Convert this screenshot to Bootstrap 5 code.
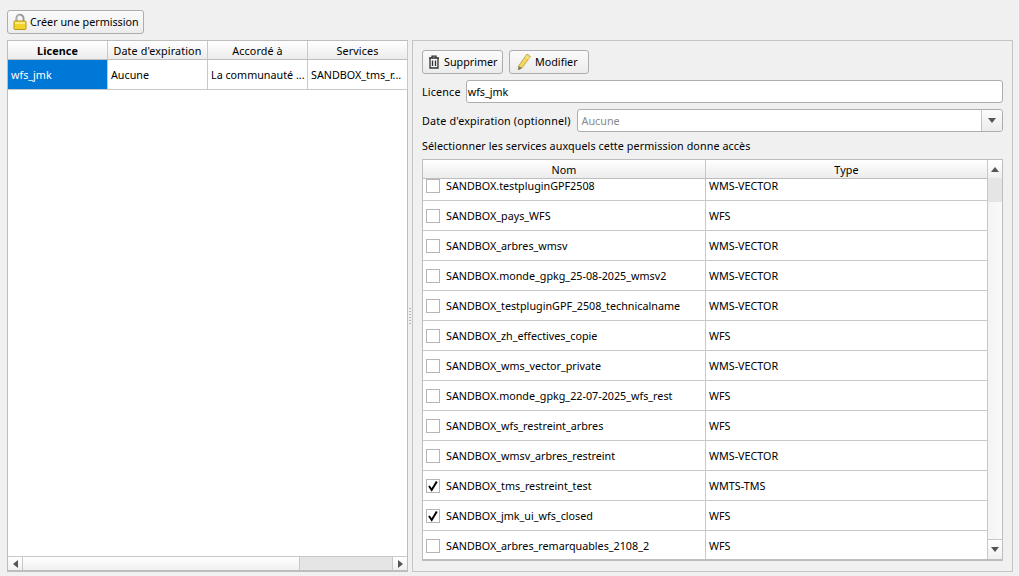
<!DOCTYPE html>
<html lang="fr"><head><meta charset="utf-8"><title>Permissions</title>
<link href="https://cdn.jsdelivr.net/npm/bootstrap@5.3.0/dist/css/bootstrap.min.css" rel="stylesheet">
<style>
html,body{height:576px;overflow:hidden}
body{background:#f0f0f0;font-family:"Noto Sans","Open Sans",sans-serif;font-size:10.75px;color:#000;padding:10px 6px 4px 7px;line-height:14px;display:flex;flex-direction:column;gap:6px}
.qbtn{height:24px;padding:0 5px;font:inherit;color:#000;background:linear-gradient(#fbfbfb,#ececec);border:1px solid #adadad;border-radius:3px;display:inline-flex;align-items:center;gap:3px;white-space:nowrap}
.qbtn svg{flex:none}
.btn-create{width:137px;padding-left:4px;gap:2px}
.btn-del{width:81px;padding-left:4px}
.btn-edit{width:80px;gap:3px;padding-left:7px}
.workarea{flex:1;min-height:0;gap:4px}
.leftpane{width:401px;background:#fff;border:1px solid #bdbdbd;border-bottom-width:2px}
.rightpane{width:601px;border:1px solid #c4c4c4;padding:9px 9px 10px;gap:6px;background:#f0f0f0}
.btnrow{gap:6px}
.grid{table-layout:fixed;border-collapse:separate;border-spacing:0;margin:0;background:#fff}
.grid th{height:19px;padding:1px 0 0;text-align:center;font-weight:400;background:linear-gradient(#fff,#ececec);border-right:1px solid #c8c8c8;border-bottom:1px solid #bdbdbd;vertical-align:middle;overflow:hidden;white-space:nowrap;letter-spacing:.12px}
.grid th.act{font-weight:700}
.grid td{height:30px;padding:0 3px;border-right:1px solid #c8c8c8;border-bottom:1px solid #c8c8c8;vertical-align:middle;overflow:hidden;white-space:nowrap}
.grid td.sel{background:#0078d7;color:#fff}
.lefttable{width:400px}
.lefttable col{width:100px}
.blank{min-height:0}
.hscroll{height:14px;border-top:1px solid #c8c8c8;background:#e5e5e5}
.sarrow{width:15px;height:100%;background:linear-gradient(#fff,#f0f0f0);display:flex;align-items:center;justify-content:center;flex:none}
.hscroll .sarrow:first-child{border-right:1px solid #c8c8c8}
.hscroll .sarrow:last-child{border-left:1px solid #c8c8c8}
.hthumb{width:277px;background:linear-gradient(#fff,#f0f0f0);border-right:1px solid #c8c8c8}
.tri-l{border:4px solid transparent;border-left:0;border-right:5px solid #555}
.tri-r{border:4px solid transparent;border-right:0;border-left:5px solid #555}
.tri-u{border:4px solid transparent;border-top:0;border-bottom:5px solid #555}
.tri-d{border:4px solid transparent;border-bottom:0;border-top:5px solid #555}
.field{height:23px;background:#fff;border:1px solid #adadad;border-radius:3px;padding:0 1px;display:flex;align-items:center}
.lbl{white-space:nowrap;letter-spacing:.17px}
.fieldrow{gap:6px}
.licfield{margin-left:-1px}
.muted{color:#8a8a8a}
.combo{padding-right:0;padding-left:4px}
.dropcell{width:21px;height:100%;margin-left:auto;border-left:1px solid #c4c4c4;background:linear-gradient(#fbfbfb,#ececec);display:flex;align-items:center;justify-content:center;border-radius:0 3px 3px 0}
.svcbox{flex:1;min-height:0;background:#fff;border:1px solid #bdbdbd;border-bottom-width:2px;overflow:hidden}
.svcmain{width:565px;min-width:0}
.svcview{flex:1;min-height:0;overflow:hidden}
.svchead{width:565px}
.svctable{width:565px;margin-top:-8px}
.c1{width:283px}
.c2{width:282px}
.svctable td.namecell{padding:0 0 0 3px}
.namecell .inner{display:flex;align-items:center;gap:6px}
.tick{width:14px;height:14px;border:1px solid #b5b5b5;background:#fff;flex:none;display:flex;align-items:center;justify-content:center}
.svctable td.typecell{padding-left:3px}
.vscroll{width:15px;border-left:1px solid #c8c8c8;background:linear-gradient(90deg,#f4f4f4,#fafafa)}
.vscroll .sarrow{height:18px;width:100%;background:linear-gradient(#fff,#f0f0f0)}
.vthumb{height:24px;background:#e5e5e5;flex:none}
.vrest{flex:1}
.vscroll .vdown{border-top:1px solid #c8c8c8;height:20px}
.splitdots{width:4px;position:absolute;left:409px;top:308px;display:flex;flex-direction:column;gap:2px}
.splitdots i{width:2px;height:1px;background:#b5b5b5;display:block}
.section-lbl{margin-top:1px;letter-spacing:.08px}
</style></head>
<body>
<div class="d-flex"><button class="qbtn btn-create" type="button">
<svg width="16" height="18" viewBox="0 0 16 18"><path d="M4.500 8V5.200a3.500 3.500 0 0 1 7 0V8" fill="none" stroke="#9a9a9a" stroke-width="2"/><path d="M5 8V5.200a3 3 0 0 1 3-3" fill="none" stroke="#d8d8d8" stroke-width=".8"/><rect x="2" y="8" width="12" height="8.500" rx="1" fill="#f3d22b" stroke="#b79a14"/><rect x="3" y="9" width="10" height="2" fill="#faea7a"/></svg>
<span>Créer une permission</span></button></div>
<div class="workarea d-flex">
  <div class="leftpane d-flex flex-column">
    <table class="grid lefttable"><colgroup><col><col><col><col></colgroup>
    <thead><tr><th class="act">Licence</th><th>Date d'expiration</th><th>Accordé à</th><th>Services</th></tr></thead>
    <tbody><tr><td class="sel">wfs_jmk</td><td>Aucune</td><td>La communauté ...</td><td>SANDBOX_tms_r...</td></tr></tbody></table>
    <div class="blank flex-grow-1"></div>
    <div class="hscroll d-flex"><div class="sarrow"><span class="tri-l"></span></div><div class="hthumb"></div><div class="flex-grow-1"></div><div class="sarrow"><span class="tri-r"></span></div></div>
  </div>
  <div class="rightpane d-flex flex-column">
    <div class="d-flex btnrow">
      <button class="qbtn btn-del" type="button"><svg width="14" height="16" viewBox="0 0 14 16"><path d="M2 4h10M5 4V2.200h4V4M3 4.500V14h8V4.500M5.500 6.500v5.500M8.500 6.500v5.500" fill="none" stroke="#333" stroke-width="1.300"/></svg><span>Supprimer</span></button>
      <button class="qbtn btn-edit" type="button"><svg width="15" height="18" viewBox="0 0 15 18"><path d="M10 1l3.500 2.500L5 15l-3.600 2L1.500 13z" fill="#f2d65a" stroke="#b8a24a" stroke-width=".8"/><path d="M1.500 13L5 15l-3.600 2z" fill="#777"/><path d="M9 3.500l3 2" stroke="#fff3a8"/></svg><span>Modifier</span></button>
    </div>
    <div class="d-flex fieldrow align-items-center"><span class="lbl">Licence</span><div class="field flex-grow-1 licfield">wfs_jmk</div></div>
    <div class="d-flex fieldrow align-items-center"><span class="lbl">Date d'expiration (optionnel)</span><div class="field combo flex-grow-1 muted">Aucune<span class="dropcell"><span class="tri-d"></span></span></div></div>
    <div class="lbl section-lbl">Sélectionner les services auxquels cette permission donne accès</div>
    <div class="svcbox d-flex">
      <div class="svcmain d-flex flex-column">
        <table class="grid svchead"><colgroup><col class="c1"><col class="c2"></colgroup><thead><tr><th>Nom</th><th>Type</th></tr></thead></table>
        <div class="svcview">
        <table class="grid svctable"><colgroup><col class="c1"><col class="c2"></colgroup><tbody>
        <tr><td class="namecell"><div class="inner"><span class="tick"></span>SANDBOX.testpluginGPF2508</div></td><td class="typecell">WMS-VECTOR</td></tr>
        <tr><td class="namecell"><div class="inner"><span class="tick"></span>SANDBOX_pays_WFS</div></td><td class="typecell">WFS</td></tr>
        <tr><td class="namecell"><div class="inner"><span class="tick"></span>SANDBOX_arbres_wmsv</div></td><td class="typecell">WMS-VECTOR</td></tr>
        <tr><td class="namecell"><div class="inner"><span class="tick"></span>SANDBOX.monde_gpkg_25-08-2025_wmsv2</div></td><td class="typecell">WMS-VECTOR</td></tr>
        <tr><td class="namecell"><div class="inner"><span class="tick"></span>SANDBOX_testpluginGPF_2508_technicalname</div></td><td class="typecell">WMS-VECTOR</td></tr>
        <tr><td class="namecell"><div class="inner"><span class="tick"></span>SANDBOX_zh_effectives_copie</div></td><td class="typecell">WFS</td></tr>
        <tr><td class="namecell"><div class="inner"><span class="tick"></span>SANDBOX_wms_vector_private</div></td><td class="typecell">WMS-VECTOR</td></tr>
        <tr><td class="namecell"><div class="inner"><span class="tick"></span>SANDBOX.monde_gpkg_22-07-2025_wfs_rest</div></td><td class="typecell">WFS</td></tr>
        <tr><td class="namecell"><div class="inner"><span class="tick"></span>SANDBOX_wfs_restreint_arbres</div></td><td class="typecell">WFS</td></tr>
        <tr><td class="namecell"><div class="inner"><span class="tick"></span>SANDBOX_wmsv_arbres_restreint</div></td><td class="typecell">WMS-VECTOR</td></tr>
        <tr><td class="namecell"><div class="inner"><span class="tick"><svg width="12" height="12" viewBox="0 0 12 12"><path d="M2 6l2.700 4L9.800 1.500" fill="none" stroke="#000" stroke-width="2"/></svg></span>SANDBOX_tms_restreint_test</div></td><td class="typecell">WMTS-TMS</td></tr>
        <tr><td class="namecell"><div class="inner"><span class="tick"><svg width="12" height="12" viewBox="0 0 12 12"><path d="M2 6l2.700 4L9.800 1.500" fill="none" stroke="#000" stroke-width="2"/></svg></span>SANDBOX_jmk_ui_wfs_closed</div></td><td class="typecell">WFS</td></tr>
        <tr><td class="namecell"><div class="inner"><span class="tick"></span>SANDBOX_arbres_remarquables_2108_2</div></td><td class="typecell">WFS</td></tr>
        </tbody></table>
        </div>
      </div>
      <div class="vscroll d-flex flex-column"><div class="sarrow"><span class="tri-u"></span></div><div class="vthumb"></div><div class="vrest"></div><div class="sarrow vdown"><span class="tri-d"></span></div></div>
    </div>
  </div>
</div>
<div class="splitdots"><i></i><i></i><i></i><i></i><i></i><i></i></div>
<script src="https://cdn.jsdelivr.net/npm/bootstrap@5.3.0/dist/js/bootstrap.bundle.min.js"></script>
</body></html>
